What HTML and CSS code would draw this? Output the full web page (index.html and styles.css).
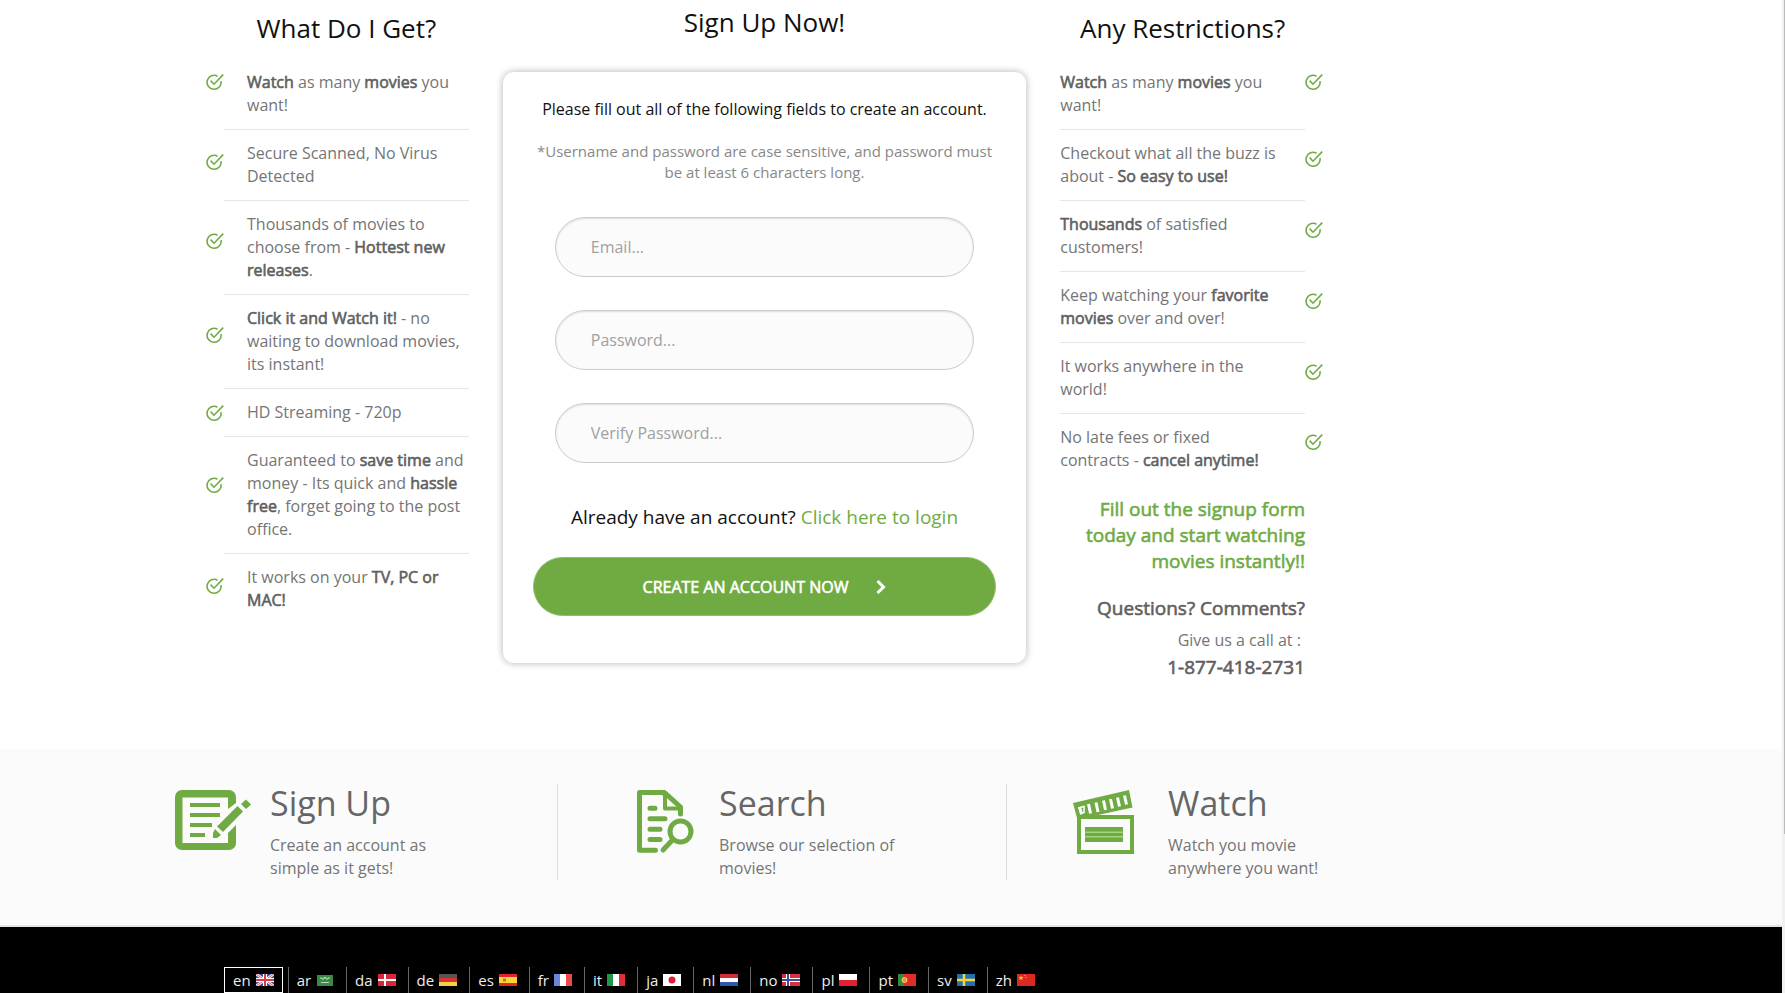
FILE: index.html
```html
<!DOCTYPE html>
<html lang="en">

<head>
  <meta charset="UTF-8">
  <title>Sign Up Now!</title>
  <meta name="viewport" content="width=device-width, initial-scale=1.0">
  <link rel="stylesheet" href="styles.css">
</head>

<body>
  <!-- shared tick icon -->
  <svg class="defs" width="0" height="0" aria-hidden="true">
    <symbol id="tick" viewBox="0 0 18 18">
      <path d="M11.5 3.2A7 7 0 1 0 15 8.2" />
      <path d="M4.6 7.6l3.4 3.6L17.2 1.6" />
    </symbol>
  </svg>

  <main class="signup">
    <section class="col">
      <h2>What Do I Get?</h2>
      <ul class="perks">
        <li><span class="tick"><svg><use href="#tick"/></svg></span><p><b>Watch</b> as many <b>movies</b> you want!</p></li>
        <li><span class="tick"><svg><use href="#tick"/></svg></span><p>Secure Scanned, No Virus Detected</p></li>
        <li><span class="tick"><svg><use href="#tick"/></svg></span><p>Thousands of movies to choose from - <b>Hottest new releases</b>.</p></li>
        <li><span class="tick"><svg><use href="#tick"/></svg></span><p><b>Click it and Watch it!</b> - no waiting to download movies, its instant!</p></li>
        <li><span class="tick"><svg><use href="#tick"/></svg></span><p>HD Streaming - 720p</p></li>
        <li><span class="tick"><svg><use href="#tick"/></svg></span><p>Guaranteed to <b>save time</b> and money - Its quick and <b>hassle free</b>, forget going to the post office.</p></li>
        <li><span class="tick"><svg><use href="#tick"/></svg></span><p>It works on your <b>TV, PC or MAC!</b></p></li>
      </ul>
    </section>

    <section class="col col-form">
      <h2>Sign Up Now!</h2>
      <form class="card">
        <p class="lead">Please fill out all of the following fields to create an account.</p>
        <p class="note">*Username and password are case sensitive, and password must be at least 6 characters long.</p>
        <div class="fields">
          <input type="email" aria-label="Email" placeholder="Email...">
          <input type="password" aria-label="Password" placeholder="Password...">
          <input type="password" aria-label="Verify Password" placeholder="Verify Password...">
        </div>
        <p class="login">Already have an account? <a href="#">Click here to login</a></p>
        <button type="button" class="cta">
          CREATE AN ACCOUNT NOW
          <svg width="10" height="16" viewBox="0 0 10 16"><path d="M1.5 2L7.5 8l-6 6" /></svg>
        </button>
      </form>
    </section>

    <section class="col">
      <h2>Any Restrictions?</h2>
      <ul class="perks perks-right">
        <li><span class="tick"><svg><use href="#tick"/></svg></span><p><b>Watch</b> as many <b>movies</b> you want!</p></li>
        <li><span class="tick"><svg><use href="#tick"/></svg></span><p>Checkout what all the buzz is about - <b>So easy to use!</b></p></li>
        <li><span class="tick"><svg><use href="#tick"/></svg></span><p><b>Thousands</b> of satisfied customers!</p></li>
        <li><span class="tick"><svg><use href="#tick"/></svg></span><p>Keep watching your <b>favorite movies</b> over and over!</p></li>
        <li><span class="tick"><svg><use href="#tick"/></svg></span><p>It works anywhere in the world!</p></li>
        <li><span class="tick"><svg><use href="#tick"/></svg></span><p>No late fees or fixed contracts - <b>cancel anytime!</b></p></li>
      </ul>
      <div class="contact">
        <p class="promo">Fill out the signup form today and start watching movies instantly!!</p>
        <p class="ask">Questions? Comments?</p>
        <p class="call">Give us a call at :&nbsp;</p>
        <p class="phone">1-877-418-2731</p>
      </div>
    </section>
  </main>

  <section class="steps">
    <div class="step">
      <svg class="step-icon" viewBox="0 0 77 66">
        <path d="M53 19V7.500H7.500V53H53V43l8-8v18a7 7 0 0 1-7 7H7a7 7 0 0 1-7-7V7a7 7 0 0 1 7-7h47a7 7 0 0 1 7 7v6z" />
        <path d="M15 13h30v4H15zM15 23h30v4H15zM15 33h22v4H15zM15 43h15v4H15z" />
        <path d="M62.500 16l5.500 5.500L48 42l-6-5.500zM66 14l5-4.500 5 5-5 4.500zM40 39l6 6-4 3h-4v-5z" />
      </svg>
      <div>
        <h3>Sign Up</h3>
        <p>Create an account as simple as it gets!</p>
      </div>
    </div>
    <div class="step">
      <svg class="step-icon" viewBox="0 0 77 66">
        <g fill="none" stroke="#6fab42" stroke-linecap="round" stroke-linejoin="round">
          <path stroke-width="5" d="M31.500 60.200H15.500V2.600h25L56.500 17v7" />
          <path stroke-width="4" d="M41 4v14.500h15" />
          <path stroke-width="5" d="M26 18.300h5M26 28.700h15M26 39.200h10M26 49.500h10M39 60l8-8.500" />
          <circle stroke-width="5" cx="56.500" cy="41.500" r="10.500" />
        </g>
        <path d="M34 2h8v6z" />
      </svg>
      <div>
        <h3>Search</h3>
        <p>Browse our selection of movies!</p>
      </div>
    </div>
    <div class="step">
      <svg class="step-icon" viewBox="0 0 77 66">
        <path fill-rule="evenodd" d="M0 13L56 0l3.500 17.500L25 25h36v39H4V28zM8 29v31h49V29z" />
        <path d="M12 37h38v15H12z" />
        <path stroke="#a5d67e" stroke-width="1.500" d="M12 42.200h38M12 46.800h38" />
        <g stroke="#fff" stroke-width="3">
          <path d="M6.500 17l2 7M15.500 14l2 9.500M23 12.500l2 9.500M30.500 10.500l2 9.500M37.500 9l2 9.500M44.500 7.500l2 9M51.500 5.500l2 9" />
          <path stroke-width="1.500" d="M5 18l6-1.500v6L7 24" fill="none" />
        </g>
      </svg>
      <div>
        <h3>Watch</h3>
        <p>Watch you movie anywhere you want!</p>
      </div>
    </div>
  </section>

  <footer>
    <nav class="langs">
      <a href="#" class="active">en <svg class="flag" viewBox="0 0 18 12"><path fill="#3b4fa0" d="M0 0h18v12H0z"/><path stroke="#fff" stroke-width="2.600" d="M0 0l18 12M18 0L0 12"/><path stroke="#e0565c" d="M0 0l18 12M18 0L0 12"/><path stroke="#fff" stroke-width="4" d="M9 0v12M0 6h18"/><path stroke="#dc3a44" stroke-width="2" d="M9 0v12M0 6h18"/></svg></a>
      <a href="#">ar <svg class="flag" viewBox="0 0 18 12"><path fill="#398a46" d="M1 1h16v11H1z"/><path stroke="#b9dcbc" fill="none" d="M4 4h2v1h2V3.500h2V5h2V4h2M5 8.500h8"/></svg></a>
      <a href="#">da <svg class="flag" viewBox="0 0 18 12"><path fill="#dc2637" d="M0 0h18v12H0z"/><path stroke="#fff" stroke-width="2" d="M7 0v12M0 6h18"/></svg></a>
      <a href="#">de <svg class="flag" viewBox="0 0 18 12"><path fill="#555" d="M0 0h18v4H0z"/><path fill="#d93030" d="M0 4h18v4H0z"/><path fill="#f5cf4a" d="M0 8h18v4H0z"/></svg></a>
      <a href="#">es <svg class="flag" viewBox="0 0 18 12"><path fill="#e02727" d="M0 0h18v12H0z"/><path fill="#fbd536" d="M0 3h18v6H0z"/><path fill="#c9762c" d="M4 4.500h3v3H4z"/></svg></a>
      <a href="#">fr <svg class="flag" viewBox="0 0 18 12"><path fill="#fff" d="M0 0h18v12H0z"/><path fill="#6c86d8" d="M0 0h6v12H0z"/><path fill="#ee4848" d="M12 0h6v12h-6z"/></svg></a>
      <a href="#">it <svg class="flag" viewBox="0 0 18 12"><path fill="#fff" d="M0 0h18v12H0z"/><path fill="#239748" d="M0 0h6v12H0z"/><path fill="#e02f34" d="M12 0h6v12h-6z"/></svg></a>
      <a href="#">ja <svg class="flag" viewBox="0 0 18 12"><path fill="#fff" d="M0 0h18v12H0z"/><circle cx="9" cy="6" r="3.500" fill="#de2032"/></svg></a>
      <a href="#">nl <svg class="flag" viewBox="0 0 18 12"><path fill="#fff" d="M0 0h18v12H0z"/><path fill="#d92b35" d="M0 0h18v4H0z"/><path fill="#2d58ac" d="M0 8h18v4H0z"/></svg></a>
      <a href="#">no <svg class="flag" viewBox="0 0 18 12"><path fill="#dc2f3b" d="M0 0h18v12H0z"/><path stroke="#fff" stroke-width="4" d="M6 0v12M0 6h18"/><path stroke="#35509b" stroke-width="2" d="M6 0v12M0 6h18"/></svg></a>
      <a href="#">pl <svg class="flag" viewBox="0 0 18 12"><path fill="#fff" d="M0 0h18v12H0z"/><path fill="#e02034" d="M0 6h18v6H0z"/></svg></a>
      <a href="#">pt <svg class="flag" viewBox="0 0 18 12"><path fill="#e22b2b" d="M0 0h18v12H0z"/><path fill="#368a3c" d="M0 0h6v12H0z"/><circle cx="6.500" cy="6" r="2.500" fill="#e98a6b" stroke="#f3dc3e"/></svg></a>
      <a href="#">sv <svg class="flag" viewBox="0 0 18 12"><path fill="#2470ad" d="M0 0h18v12H0z"/><path stroke="#f7d43d" stroke-width="2.500" d="M7 0v12M0 6h18"/></svg></a>
      <a href="#">zh <svg class="flag" viewBox="0 0 18 12"><path fill="#dd2a20" d="M0 0h18v12H0z"/><path fill="#f8cb3c" d="M4 1.500l.7 1.600h1.800L5.100 4.200l.5 1.800L4 5 2.400 6l.5-1.800L1.500 3.100h1.800zM7.500 1h1v1h-1zM8.500 3h1v1h-1z"/></svg></a>
    </nav>
  </footer>

  <div class="scroll"></div>
</body>

</html>
```

FILE: styles.css
```css
:root {
  --green: #6fab42;
  --text: #757575;
  --bold: #606060;
  --rule: #e6e6e6;
  --light-bg: #fbfbfb;
}

* {
  box-sizing: border-box;
}

body {
  margin: 0;
  font: 16px/23px "Open Sans", sans-serif;
  color: var(--text);
  background-color: #fff;
}

h2, h3, p, ul {
  margin: 0;
  padding: 0;
  font-weight: 400;
}
.defs {position: absolute}

/* soft bold, keeps the regular letter widths */
b, .promo, .ask, .phone, .cta {
  font-weight: 400;
  -webkit-text-stroke: .6px currentColor;
}
b {color: var(--bold)}

a {
  color: var(--green);
  text-decoration: none;
}

/* three columns */
.signup {
  display: grid;
  grid-template-columns: 1fr 2fr 1fr;
  gap: 33px;
  max-width: 1323px;
  padding: 0 0 69px 206px;
}
h2 {
  font-size: 26px;
  line-height: 36px;
  color: #111;
  text-align: center;
}
.col h2 {margin: 10px 0 13px 18px}
.col:last-child h2 {margin: 10px 18px 13px 0}
.col-form h2,
.col.col-form h2 {margin: 4px 0 31px}

/* lists */
.perks {list-style: none}
.perks li {display: flex}
.perks p {
  flex: 1;
  padding: 12px 0 12px 23px;
  border-bottom: 1px solid var(--rule);
}
.perks li:last-child p {border-bottom: 0}
.tick {
  display: flex;
  flex-direction: column;
  width: 18px;
  padding-top: 6px;
}
.tick::before {
  content: '';
  flex: 36;
}
.tick::after {
  content: '';
  flex: 64;
}
.tick svg {
  width: 18px;
  height: 18px;
  fill: none;
  stroke: var(--green);
  stroke-width: 1.6;
}
.perks-right li {flex-direction: row-reverse}
.perks-right p {padding: 12px 23px 12px 0}
.perks-right .tick {padding-top: 1px}
.perks li:first-child .tick {padding-top: 14px}
.perks li:first-child .tick::before {display: none}

/* form */
.card {
  padding: 26px 30px 47px;
  border: 1px solid #ddd;
  border-radius: 12px;
  box-shadow: 0 0 6px rgba(0,0,0,.25);
  text-align: center;
}
.lead {color: #111}
.note {
  margin: 20px 0 34px;
  font-size: 15px;
  line-height: 21px;
  color: #888;
}
.fields {
  display: grid;
  gap: 33px;
  padding: 0 22px;
}
.fields input {
  width: 100%;
  height: 60px;
  padding: 0 35px;
  border: 1px solid #ccc;
  border-radius: 30px;
  background-color: var(--light-bg);
  box-shadow: inset 0 1px 2px rgba(0,0,0,.12);
  font: inherit;
}
.fields input::placeholder {color: #a0a0a0}
.login {
  margin: 41px 0 27px;
  font-size: 19px;
  line-height: 26px;
  color: #111;
}
.cta {
  display: flex;
  align-items: center;
  justify-content: center;
  gap: 28px;
  width: 100%;
  height: 59px;
  border: 1px solid #8fc067;
  border-radius: 30px;
  background-color: #6fab42;
  color: #fff;
  font-family: inherit;
  font-size: 16px;
  cursor: pointer;
}
.cta svg {
  fill: none;
  stroke: #fff;
  stroke-width: 3;
}

.contact {
  padding-right: 18px;
  text-align: right;
}
.promo, .ask, .phone {
  font-size: 19px;
  line-height: 26px;
  color: var(--bold);
}
.contact .promo {
  margin: 12px 0 21px;
  color: var(--green);
}
.call {margin: 8px 0 2px}

/* steps */
.steps {
  display: flex;
  padding: 35px 0 45px 109px;
  background-color: var(--light-bg);
  border-bottom: 2px solid #e4e4e4;
}
.step {
  display: flex;
  flex: 0 1 449px;
  gap: 18px;
  padding: 0 100px 0 66px;
  border-right: 1px solid #ddd;
}
.step:last-child {border-right: 0}
.step-icon {
  flex: none;
  width: 77px;
  height: 66px;
  margin-top: 6px;
  fill: var(--green);
}
.step h3 {
  margin-bottom: 12px;
  font-size: 34px;
  line-height: 38px;
  color: #666;
}

/* footer */
footer {
  padding: 40px 0 1px 224px;
  background-color: #000;
}
.langs {
  display: flex;
  height: 26px;
}
.langs a {
  display: flex;
  align-items: center;
  gap: 5px;
  padding: 0 12px 0 8px;
  border-left: 1px solid #666;
  font-size: 15px;
  color: #eee;
}
.langs .active {
  margin-right: 5px;
  padding: 0 8px;
  border: 1px solid #fff;
}
.flag {
  width: 18px;
  height: 12px;
}

/* page scroll strip */
.scroll {
  position: fixed;
  top: 0;
  right: 0;
  bottom: 0;
  width: 3px;
  background: linear-gradient(#bbb, #bbb) right top / 1px 84% no-repeat #f0f0f0;
}
```
